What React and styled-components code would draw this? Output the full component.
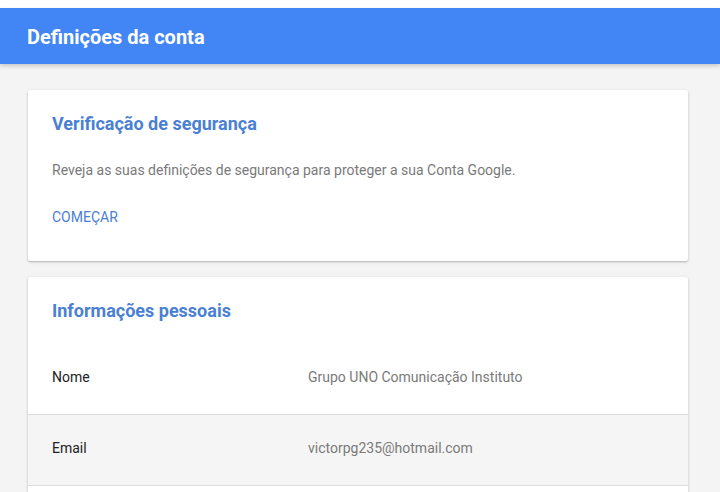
import React from 'react';
import styled, { createGlobalStyle } from 'styled-components';

const GlobalStyle = createGlobalStyle`
  html, body {
    margin: 0;
    padding: 0;
    background: #ffffff;
    font-family: Roboto, "Liberation Sans", Arial, sans-serif;
  }
  * { box-sizing: border-box; }
`;

const Page = styled.div`
  padding-top: 8px;
  min-height: 492px;
  display: flex;
  flex-direction: column;
`;

const TopBar = styled.header`
  height: 56px;
  background: #4285f4;
  display: flex;
  align-items: center;
  padding-left: 27px;
  padding-top: 2px;
  box-shadow: 0 2px 4px rgba(0, 0, 0, 0.18);
  position: relative;
  z-index: 1;
`;

const TopTitle = styled.h1`
  margin: 0;
  color: #ffffff;
  font-size: 20px;
  font-weight: 700;
`;

const Content = styled.main`
  flex: 1;
  background: #f4f4f4;
  padding: 26px 32px 16px 28px;
  display: flex;
  flex-direction: column;
  gap: 16px;
`;

const Card = styled.section`
  background: #ffffff;
  border-radius: 2px;
  box-shadow: 0 1px 3px rgba(0, 0, 0, 0.22), 0 1px 1px rgba(0, 0, 0, 0.08);
  padding: ${(p) => (p.$flush ? '22px 0 0' : '22px 24px 34px')};
`;

const CardTitle = styled.h2`
  margin: 0;
  padding: ${(p) => (p.$inset ? '0 24px' : '0')};
  color: #4a80d4;
  font-size: 18px;
  font-weight: 700;
  line-height: 24px;
`;

const Description = styled.p`
  margin: 24px 0 0;
  color: #7a7a7a;
  font-size: 14px;
  line-height: 20px;
`;

const LinkButton = styled.a`
  display: inline-block;
  margin-top: 27px;
  color: #4a80d4;
  font-size: 14px;
  line-height: 20px;
  text-transform: uppercase;
  text-decoration: none;
  cursor: pointer;
`;

const InfoList = styled.div`
  margin-top: 21px;
`;

const InfoRow = styled.div`
  display: grid;
  grid-template-columns: 256px 1fr;
  align-items: center;
  height: 71px;
  padding: 0 24px 4px;
  background: ${(p) => (p.$active ? '#f5f5f5' : '#ffffff')};
  border-bottom: 1px solid #dcdcdc;
`;

const InfoLabel = styled.span`
  color: #222222;
  font-size: 14px;
`;

const InfoValue = styled.span`
  color: #7a7a7a;
  font-size: 14px;
`;

const rows = [
  { label: 'Nome', value: 'Grupo UNO Comunicação Instituto' },
  { label: 'Email', value: 'victorpg235@hotmail.com', active: true },
  { label: '', value: '' },
];

export default function App() {
  return (
    <>
      <GlobalStyle />
      <Page>
        <TopBar>
          <TopTitle>Definições da conta</TopTitle>
        </TopBar>
        <Content>
          <Card>
            <CardTitle>Verificação de segurança</CardTitle>
            <Description>
              Reveja as suas definições de segurança para proteger a sua Conta Google.
            </Description>
            <LinkButton>Começar</LinkButton>
          </Card>
          <Card $flush>
            <CardTitle $inset>Informações pessoais</CardTitle>
            <InfoList>
              {rows.map((r, i) => (
                <InfoRow key={i} $active={r.active}>
                  <InfoLabel>{r.label}</InfoLabel>
                  <InfoValue>{r.value}</InfoValue>
                </InfoRow>
              ))}
            </InfoList>
          </Card>
        </Content>
      </Page>
    </>
  );
}
